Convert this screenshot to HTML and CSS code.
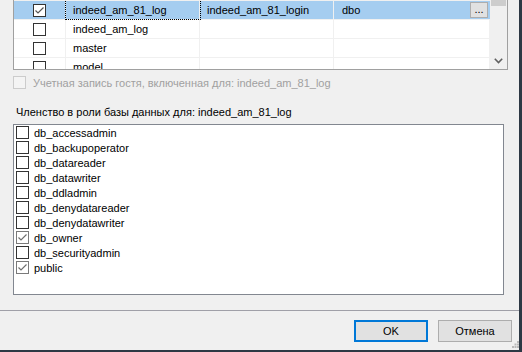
FILE: index.html
```html
<!DOCTYPE html>
<html lang="ru">
<head>
    <meta charset="UTF-8">
    <title>Свойства имени входа</title>
    <link rel="stylesheet" href="styles.css">
</head>
<body>
<div class="dialog">
    <!-- сопоставление пользователей -->
    <div class="grid">
        <div class="rows">
            <div class="row selected">
                <div class="cell check"><span class="box on"><svg width="11" height="11" viewBox="0 0 11 11"><polyline points="1.5,5.5 4,8 9.5,2.5" fill="none" stroke="#555" stroke-width="1.2"/></svg></span></div>
                <div class="cell focus">indeed_am_81_log</div>
                <div class="cell">indeed_am_81_login</div>
                <div class="cell schema"><span>dbo</span><span class="dots">...</span></div>
            </div>
            <div class="row">
                <div class="cell check"><span class="box"></span></div>
                <div class="cell">indeed_am_log</div>
                <div class="cell"></div>
                <div class="cell"></div>
            </div>
            <div class="row">
                <div class="cell check"><span class="box"></span></div>
                <div class="cell">master</div>
                <div class="cell"></div>
                <div class="cell"></div>
            </div>
            <div class="row">
                <div class="cell check"><span class="box"></span></div>
                <div class="cell">model</div>
                <div class="cell"></div>
                <div class="cell"></div>
            </div>
        </div>
        <div class="vscroll">
            <div class="thumb"></div>
            <svg class="arrow" width="9" height="6" viewBox="0 0 9 6"><polyline points="0.8,0.8 4.5,4.5 8.2,0.8" fill="none" stroke="#606060" stroke-width="1.6"/></svg>
        </div>
    </div>

    <div class="guest">
        <span class="box disabled"></span>
        <span>Учетная запись гостя, включенная для: indeed_am_81_log</span>
    </div>

    <div class="label">Членство в роли базы данных для: indeed_am_81_log</div>

    <div class="roles">
        <div class="role"><span class="box"></span>db_accessadmin</div>
        <div class="role"><span class="box"></span>db_backupoperator</div>
        <div class="role"><span class="box"></span>db_datareader</div>
        <div class="role"><span class="box"></span>db_datawriter</div>
        <div class="role"><span class="box"></span>db_ddladmin</div>
        <div class="role"><span class="box"></span>db_denydatareader</div>
        <div class="role"><span class="box"></span>db_denydatawriter</div>
        <div class="role"><span class="box grey"><svg width="11" height="11" viewBox="0 0 11 11"><polyline points="1.5,5.5 4,8 9.5,2.5" fill="none" stroke="#6f6f6f" stroke-width="1.2"/></svg></span>db_owner</div>
        <div class="role"><span class="box"></span>db_securityadmin</div>
        <div class="role"><span class="box grey"><svg width="11" height="11" viewBox="0 0 11 11"><polyline points="1.5,5.5 4,8 9.5,2.5" fill="none" stroke="#6f6f6f" stroke-width="1.2"/></svg></span>public</div>
    </div>

    <div class="separator"></div>

    <div class="buttons">
        <div class="btn default">OK</div>
        <div class="btn">Отмена</div>
        <svg class="grip" width="7" height="7" viewBox="0 0 7 7">
            <rect x="5" y="0" width="2" height="2" fill="#b9b9b9"/>
            <rect x="2.5" y="2.5" width="2" height="2" fill="#b9b9b9"/>
            <rect x="5" y="2.5" width="2" height="2" fill="#b9b9b9"/>
            <rect x="0" y="5" width="2" height="2" fill="#b9b9b9"/>
            <rect x="2.5" y="5" width="2" height="2" fill="#b9b9b9"/>
            <rect x="5" y="5" width="2" height="2" fill="#b9b9b9"/>
        </svg>
    </div>
</div>
</body>
</html>
```

FILE: styles.css
```css
html, body {
    margin: 0;
    padding: 0;
    width: 522px;
    height: 352px;
    overflow: hidden;
    background-color: #f0f0f0;
    font-family: "Liberation Sans", Arial, sans-serif;
    font-size: 11px;
    color: #000;
}

.dialog {
    width: 519px;
    height: 350px;
    border-right: 3px solid #2d3844;
    border-bottom: 2px solid #2d3844;
    overflow: hidden;
}

/* таблица сопоставления */
.grid {
    display: flex;
    margin-left: 13px;
    width: 495px;
    height: 70px;
    box-sizing: border-box;
    border: 1px solid #a0a0a0;
    border-top: none;
    background-color: #fff;
}

.rows {
    flex: 1;
    border-top: 1px solid #f0f0f0;
    overflow: hidden;
}

.row {
    display: grid;
    grid-template-columns: 52px 134px 134px 156px;
    height: 19px;
    box-sizing: border-box;
    border-bottom: 1px solid #f0f0f0;
}

.row.selected {
    background-color: #a5cdf0;
}

.cell {
    display: flex;
    align-items: center;
    padding-left: 7px;
    box-sizing: border-box;
    border-right: 1px solid #f0f0f0;
    white-space: nowrap;
    overflow: hidden;
}

.cell.check {
    justify-content: center;
    padding-left: 0;
}

.cell.focus {
    outline: 1px dotted #000;
    overflow: visible;
}

.cell.schema {
    justify-content: space-between;
    padding-left: 8px;
    padding-right: 2px;
    border-right: none;
}

.dots {
    width: 18px;
    height: 16px;
    box-sizing: border-box;
    border: 1px solid #adadad;
    background-color: #e1e1e1;
    text-align: center;
    line-height: 12px;
}

.vscroll {
    width: 17px;
    background-color: #f0f0f0;
    display: flex;
    flex-direction: column;
    align-items: center;
}

.thumb {
    width: 15px;
    height: 6px;
    background-color: #cdcdcd;
}

.arrow {
    margin-top: 52px;
}

/* флажки */
.box {
    display: inline-flex;
    align-items: center;
    justify-content: center;
    width: 13px;
    height: 13px;
    box-sizing: border-box;
    border: 1px solid #333;
    background-color: #fff;
    flex-shrink: 0;
}

.box.grey {
    border-color: #7a7a7a;
}

.box.disabled {
    border-color: #cccccc;
    background-color: #f4f4f4;
}

.guest {
    display: flex;
    align-items: center;
    gap: 7px;
    margin-top: 6px;
    margin-left: 13px;
    height: 13px;
    color: #a0a0a0;
}

.label {
    margin-top: 17px;
    margin-left: 16px;
    height: 13px;
    line-height: 13px;
}

.roles {
    margin-top: 5px;
    margin-left: 13px;
    width: 491px;
    height: 171px;
    box-sizing: border-box;
    border: 1px solid #828790;
    background-color: #fff;
    padding: 0 0 0 2px;
}

.role {
    display: flex;
    align-items: center;
    gap: 5px;
    height: 15px;
}

.separator {
    margin-top: 15px;
    height: 1px;
    background-color: #a0a0a8;
}

.buttons {
    display: flex;
    justify-content: flex-end;
    gap: 10px;
    margin-top: 9px;
    padding-right: 7px;
    position: relative;
}

.btn {
    width: 74px;
    height: 22px;
    box-sizing: border-box;
    border: 1px solid #adadad;
    background-color: #e1e1e1;
    display: flex;
    align-items: center;
    justify-content: center;
}

.btn.default {
    border: 2px solid #0078d7;
}

.grip {
    position: absolute;
    right: 0;
    top: 21px;
}
```
